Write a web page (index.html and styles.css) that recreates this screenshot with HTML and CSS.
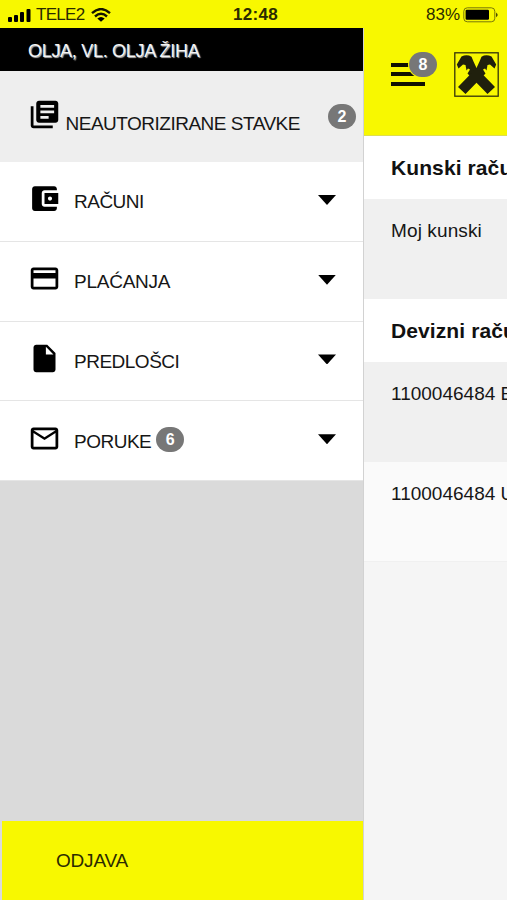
FILE: index.html
```html
<!DOCTYPE html>
<html lang="hr">
<head>
<meta charset="utf-8">
<title>Izbornik</title>
<link rel="stylesheet" href="styles.css">
</head>
<body>
<header class="status">
  <svg class="signal" viewBox="0 0 24 14"><rect x="0" y="9" width="4" height="5" rx="1"/><rect x="6" y="7" width="4" height="7" rx="1"/><rect x="12" y="4" width="4" height="10" rx="1"/><rect x="18.5" y="1" width="4" height="13" rx="1"/></svg>
  <span class="carrier">TELE2</span>
  <svg class="wifi" viewBox="0 0 20 14"><path d="M1 5.2Q10-3 19 5.2M4 8.5q6-5.4 12 0" fill="none" stroke="#151500" stroke-width="2.4"/><path d="M6.3 10.4q3.7-3 7.4 0L10 13.8z"/></svg>
  <span class="time">12:48</span>
  <span class="percent">83%</span>
  <svg class="battery" viewBox="0 0 36 16"><rect x=".8" y=".8" width="31" height="14" rx="3.5" fill="none" stroke="#77770a"/><rect x="2.6" y="2.8" width="23.4" height="10" rx="1.2"/><path d="M33.3 5.5q2.4 2.4 0 4.8z"/></svg>
</header>
<div class="screen">
  <nav class="drawer">
    <div class="user"><span>OLJA, VL. OLJA ŽIHA</span></div>
    <a class="row pending">
      <svg class="icon" viewBox="0 0 24 24"><path d="M4 6H2v14c0 1.1.9 2 2 2h14v-2H4V6zm16-4H8c-1.1 0-2 .9-2 2v12c0 1.1.9 2 2 2h12c1.1 0 2-.9 2-2V4c0-1.1-.9-2-2-2zm-1 9H9V9h10v2zm-4 4H9v-2h6v2zm4-8H9V5h10v2z"/></svg>
      <span class="label">NEAUTORIZIRANE STAVKE</span><span class="badge">2</span>
    </a>
    <a class="row">
      <svg class="icon" viewBox="0 0 24 24"><path d="M21 18v1c0 1.1-.9 2-2 2H5c-1.11 0-2-.9-2-2V5c0-1.1.89-2 2-2h14c1.1 0 2 .9 2 2v1h-9c-1.11 0-2 .9-2 2v8c0 1.1.89 2 2 2h9zm-9-2h10V8H12v8zm4-2.5c-.83 0-1.5-.67-1.5-1.5s.67-1.5 1.5-1.5 1.5.67 1.5 1.5-.67 1.5-1.5 1.5z"/></svg>
      <span class="label">RAČUNI</span><i class="caret"></i>
    </a>
    <a class="row">
      <svg class="icon" viewBox="0 0 24 24"><path d="M20 4H4c-1.11 0-1.99.89-1.99 2L2 18c0 1.11.89 2 2 2h16c1.11 0 2-.89 2-2V6c0-1.11-.89-2-2-2zm0 14H4v-6h16v6zm0-10H4V6h16v2z"/></svg>
      <span class="label wide">PLAĆANJA</span><i class="caret"></i>
    </a>
    <a class="row">
      <svg class="icon" viewBox="0 0 24 24"><path d="M6 2c-1.1 0-1.99.9-1.99 2L4 20c0 1.1.89 2 1.99 2H18c1.1 0 2-.9 2-2V8l-6-6H6zm7 7V3.5L18.5 9H13z"/></svg>
      <span class="label">PREDLOŠCI</span><i class="caret"></i>
    </a>
    <a class="row">
      <svg class="icon" viewBox="0 0 24 24"><path d="M20 4H4c-1.1 0-1.99.9-1.99 2L2 18c0 1.1.9 2 2 2h16c1.1 0 2-.9 2-2V6c0-1.1-.9-2-2-2zm0 14H4V8l8 5 8-5v10zm-8-7L4 6h16l-8 5z"/></svg>
      <span class="label">PORUKE</span><span class="badge">6</span><i class="caret"></i>
    </a>
    <a class="logout"><span>ODJAVA</span></a>
  </nav>
  <main class="content">
    <div class="appbar">
      <div class="menu"><i></i><i></i><i></i><span class="badge">8</span></div>
      <svg class="logo" viewBox="0 0 45 45"><rect x=".8" y=".8" width="43.4" height="43.4" fill="none" stroke="#34340a" stroke-width="1.3"/><g id="hammer"><path d="M2.8 12.5L7.5 4.5Q13 2 17.500 4.800L19.500 9.500L22.500 16L41 35L33.5 42L13.500 21.500L16 17.500L14 16.500L12.500 18.500L11.500 13L9 12.500L4.500 16.500z"/></g><use href="#hammer" transform="matrix(-1 0 0 1 45 0)"/></svg>
    </div>
    <h2>Kunski raču</h2>
    <div class="item"><span class="name">Moj kunski</span></div>
    <h2>Devizni raču</h2>
    <div class="item"><span>1100046484 E</span></div>
    <div class="item light"><span>1100046484 U</span></div>
  </main>
</div>
</body>
</html>
```
FILE: styles.css
```css
* { box-sizing: border-box; }
body { margin: 0; width: 507px; height: 900px; overflow: hidden; background: #f5f5f5; font-family: "Liberation Sans", Arial, sans-serif; font-size: 19px; color: #161616; }
svg { display: block; flex: none; }
span { white-space: nowrap; }
.status { height: 28px; background: #f8f800; display: flex; align-items: center; padding: 2px 8px 0; font-size: 17px; line-height: 26px; color: #2b2b00; }
.signal { width: 24px; height: 14px; }
.carrier { margin-left: 4px; width: 48px; letter-spacing: -.7px; }
.wifi { width: 20px; height: 14px; margin-left: 7px; }
.time { margin-left: 122px; width: 47px; font-weight: bold; letter-spacing: .3px; }
.percent { margin-left: 146px; width: 35px; }
.battery { width: 36px; height: 16px; margin-left: 2px; }
.screen { display: flex; height: 872px; }
.drawer { width: 364px; flex: none; background: #dadada; border-right: 1px solid #d2d2d2; display: flex; flex-direction: column; }
.user { height: 43px; background: #000; color: #f4f4f4; padding: 2px 0 0 28px; font-size: 18px; line-height: 43px; letter-spacing: -.3px; text-shadow: 1px 1px 1px #bbb; }
.row { height: 79.8px; background: #fff; border-bottom: 1px solid #e5e5e5; display: flex; align-items: center; padding: 0 27px 5px 27.5px; }
.row.pending { height: 91px; background: #eee; border: 0; padding: 0 7px 5px 27.5px; }
.icon { width: 33px; height: 33px; }
.label { margin-left: 13.5px; padding-top: 6.5px; line-height: 22px; letter-spacing: -.5px; }
.label.wide { letter-spacing: -.25px; }
.pending .label { margin-left: 5px; padding-top: 19px; }
.badge { width: 28px; height: 25px; border-radius: 13px; background: #777; color: #fff; font-size: 16px; font-weight: bold; line-height: 25px; text-align: center; }
.row .badge { margin-left: 5px; margin-top: 3px; }
.pending .badge { margin-left: auto; margin-top: 5px; }
.caret { width: 18px; height: 10px; margin-left: auto; margin-top: 2px; background: #000; clip-path: polygon(0 0, 100% 0, 50% 100%); }
.logout { margin: auto 0 0 2px; height: 79px; background: #f8f800; padding-left: 54px; line-height: 79px; letter-spacing: -.2px; color: #2b2b00; }
.content { flex: 1; min-width: 0; overflow: hidden; }
.appbar { height: 108px; background: #f8f800; border-bottom: 1px solid #dede50; display: flex; align-items: flex-start; padding: 24px 0 0 27px; }
.menu { width: 46px; height: 36px; padding-top: 11px; position: relative; flex: none; }
.menu i { display: block; width: 34px; height: 4px; margin-bottom: 5.3px; background: #111100; }
.menu .badge { position: absolute; left: 18px; top: 0; box-shadow: 0 0 0 1px #f8f800; }
.logo { width: 45px; height: 45px; margin-left: 17px; }
.logo g, .logo use { fill: #20200d; }
h2 { margin: 0; height: 63px; background: #fff; padding-left: 27px; font-size: 21px; line-height: 64px; letter-spacing: .1px; white-space: nowrap; color: #111; }
.item { height: 100px; background: #f0f0f0; padding: 20px 0 0 27px; line-height: 23px; font-size: 19px; }
.item .name { letter-spacing: .12px; }
.item.light { background: #fafafa; border-bottom: 1px solid #f0f0f0; }
```
